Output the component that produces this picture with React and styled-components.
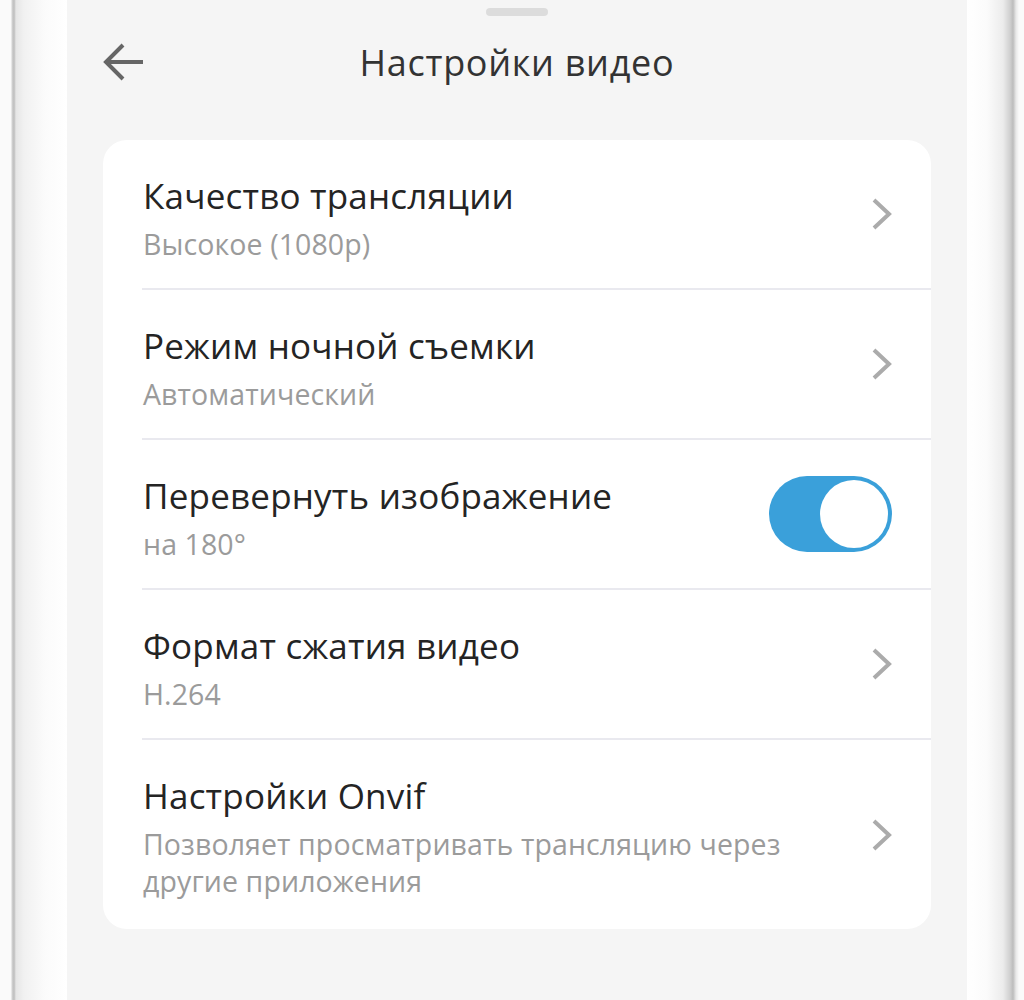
import React from 'react';
import styled, { createGlobalStyle } from 'styled-components';

const GlobalStyle = createGlobalStyle`
    html, body {
        margin: 0;
        padding: 0;
        background: #fff;
    }
    body {
        font-family: "Open Sans", "Noto Sans", sans-serif;
        -webkit-font-smoothing: antialiased;
    }
`;

const ROWS = [
    { title: 'Качество трансляции', subtitle: 'Высокое (1080p)', control: 'chevron' },
    { title: 'Режим ночной съемки', subtitle: 'Автоматический', control: 'chevron' },
    { title: 'Перевернуть изображение', subtitle: 'на 180°', control: 'toggle' },
    { title: 'Формат сжатия видео', subtitle: 'H.264', control: 'chevron' },
    {
        title: 'Настройки Onvif',
        subtitle: 'Позволяет просматривать трансляцию через другие приложения',
        control: 'chevron',
    },
];

const Phone = styled.div`
    display: flex;
    width: 1024px;
    height: 1000px;
    overflow: hidden;
`;

const Bezel = styled.div`
    flex: 0 0 ${(p) => p.width}px;
    background: ${(p) => (p.side === 'left'
        ? 'linear-gradient(to right, #fafafa 0, #fafafa 11px, #d2d2d2 12px, #bdbdbd 14px, #e6e6e6 16px, #f1f1f1 24px, #fbfbfb 45px, #ffffff 67px)'
        : 'linear-gradient(to right, #ffffff 0, #fbfbfb 20px, #ececec 36px, #d0d0d0 43px, #bcbcbc 46px, #e8e8e8 49px, #fafafa 52px, #fafafa 57px)')};
`;

const Screen = styled.div`
    flex: 0 0 900px;
    background: #f5f5f5;
    display: flex;
    flex-direction: column;
    padding: 8px 36px 0;
    box-sizing: border-box;
`;

const Handle = styled.div`
    align-self: center;
    width: 62px;
    height: 8px;
    border-radius: 4px;
    background: #dcdcdc;
`;

const Header = styled.div`
    display: grid;
    grid-template-columns: 60px 1fr 60px;
    align-items: center;
    height: 92px;
    margin-bottom: 4px;
`;

const Title = styled.h1`
    margin: 0;
    text-align: center;
    font-size: 36px;
    font-weight: 400;
    color: #333;
    letter-spacing: 0.7px;
`;

const Card = styled.div`
    margin-top: 28px;
    background: #fff;
    border-radius: 24px;
    overflow: hidden;
`;

const Row = styled.div`
    display: flex;
    align-items: center;
    justify-content: space-between;
    margin-left: 39px;
    padding: 0 39px 0 1px;
    border-bottom: ${(p) => (p.last ? 'none' : '2px solid #e9e9ef')};
`;

const Texts = styled.div`
    display: flex;
    flex-direction: column;
    gap: 10px;
    max-width: 660px;
    padding: 36px 0 ${(p) => (p.last ? 29 : 25)}px;
`;

const RowTitle = styled.div`
    font-size: 35px;
    line-height: 40px;
    color: #242424;
    letter-spacing: 0.2px;
`;

const RowSubtitle = styled.div`
    font-size: 28.5px;
    line-height: 37px;
    color: #9b9b9b;
    letter-spacing: 0.1px;
`;

const Switch = styled.div`
    width: 123px;
    height: 76px;
    border-radius: 38px;
    background: #3aa0da;
    display: flex;
    align-items: center;
    justify-content: flex-end;
    padding: 4px;
    box-sizing: border-box;
    flex-shrink: 0;
`;

const Knob = styled.div`
    width: 68px;
    height: 68px;
    border-radius: 50%;
    background: #fff;
`;

const BackIcon = () => (
    <svg width="42" height="40" viewBox="0 0 42 40" fill="none">
        <path d="M20 3 L3 20 L20 37 M3 20 H40" stroke="#666" strokeWidth="4" />
    </svg>
);

const Chevron = () => (
    <svg width="20" height="32" viewBox="0 0 20 32" fill="none" style={{ flexShrink: 0 }}>
        <path d="M2 2 L17 16 L2 30" stroke="#ababab" strokeWidth="4" />
    </svg>
);

const App = () => (
    <>
        <GlobalStyle />
        <Phone>
            <Bezel side="left" width={67} />
            <Screen>
                <Handle />
                <Header>
                    <BackIcon />
                    <Title>Настройки видео</Title>
                    <span />
                </Header>
                <Card>
                    {ROWS.map((row, i) => {
                        const last = i === ROWS.length - 1;
                        return (
                            <Row key={row.title} last={last}>
                                <Texts last={last}>
                                    <RowTitle>{row.title}</RowTitle>
                                    <RowSubtitle>{row.subtitle}</RowSubtitle>
                                </Texts>
                                {row.control === 'toggle' ? (
                                    <Switch><Knob /></Switch>
                                ) : (
                                    <Chevron />
                                )}
                            </Row>
                        );
                    })}
                </Card>
            </Screen>
            <Bezel side="right" width={57} />
        </Phone>
    </>
);

export default App;
